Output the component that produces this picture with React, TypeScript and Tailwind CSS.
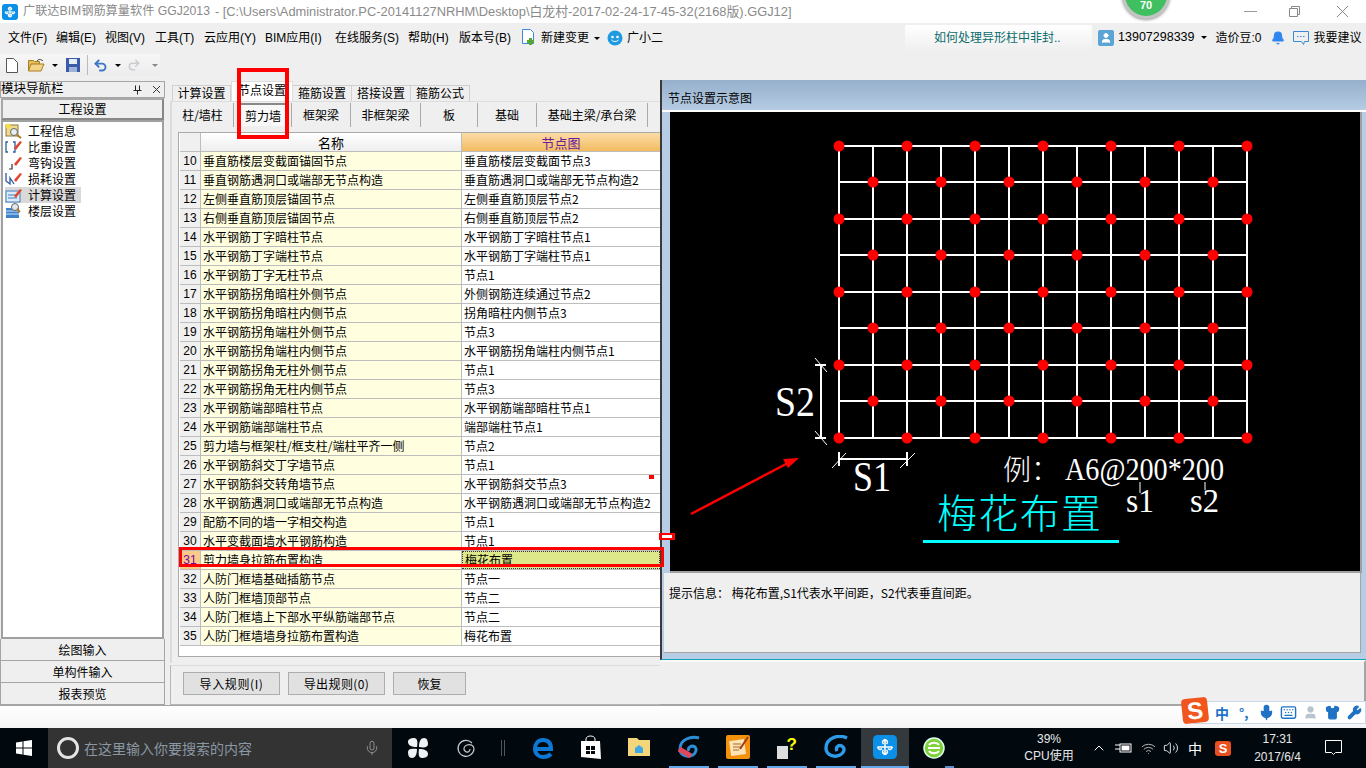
import { Bell, ChevronUp, Keyboard, Mic, Redo2, Shirt, Undo2, User, Volume2, Wifi, Wrench } from 'lucide-react';

const menus = [
  { t: '文件(F)', c: 'w-[48px]' },
  { t: '编辑(E)', c: 'w-[49px]' },
  { t: '视图(V)', c: 'w-[50px]' },
  { t: '工具(T)', c: 'w-[49px]' },
  { t: '云应用(Y)', c: 'w-[61px]' },
  { t: 'BIM应用(I)', c: 'w-[70px]' },
  { t: '在线服务(S)', c: 'w-[73px]' },
  { t: '帮助(H)', c: 'w-[51px]' },
  { t: '版本号(B)', c: 'w-[60px]' },
];

const subTabs = [
  { t: '柱/墙柱', c: 'w-[62px]' },
  { t: '剪力墙', c: 'w-[58px]', on: true },
  { t: '框架梁', c: 'w-[59px]' },
  { t: '非框架梁', c: 'w-[70px]' },
  { t: '板', c: 'w-[57px]' },
  { t: '基础', c: 'w-[59px]' },
  { t: '基础主梁/承台梁', c: 'w-[111px]' },
];

const rows = [
  [10, '垂直筋楼层变截面锚固节点', '垂直筋楼层变截面节点3'],
  [11, '垂直钢筋遇洞口或端部无节点构造', '垂直筋遇洞口或端部无节点构造2'],
  [12, '左侧垂直筋顶层锚固节点', '左侧垂直筋顶层节点2'],
  [13, '右侧垂直筋顶层锚固节点', '右侧垂直筋顶层节点2'],
  [14, '水平钢筋丁字暗柱节点', '水平钢筋丁字暗柱节点1'],
  [15, '水平钢筋丁字端柱节点', '水平钢筋丁字端柱节点1'],
  [16, '水平钢筋丁字无柱节点', '节点1'],
  [17, '水平钢筋拐角暗柱外侧节点', '外侧钢筋连续通过节点2'],
  [18, '水平钢筋拐角暗柱内侧节点', '拐角暗柱内侧节点3'],
  [19, '水平钢筋拐角端柱外侧节点', '节点3'],
  [20, '水平钢筋拐角端柱内侧节点', '水平钢筋拐角端柱内侧节点1'],
  [21, '水平钢筋拐角无柱外侧节点', '节点1'],
  [22, '水平钢筋拐角无柱内侧节点', '节点3'],
  [23, '水平钢筋端部暗柱节点', '水平钢筋端部暗柱节点1'],
  [24, '水平钢筋端部端柱节点', '端部端柱节点1'],
  [25, '剪力墙与框架柱/框支柱/端柱平齐一侧', '节点2'],
  [26, '水平钢筋斜交丁字墙节点', '节点1'],
  [27, '水平钢筋斜交转角墙节点', '水平钢筋斜交节点3'],
  [28, '水平钢筋遇洞口或端部无节点构造', '水平钢筋遇洞口或端部无节点构造2'],
  [29, '配筋不同的墙一字相交构造', '节点1'],
  [30, '水平变截面墙水平钢筋构造', '节点1'],
  [31, '剪力墙身拉筋布置构造', '梅花布置'],
  [32, '人防门框墙基础插筋节点', '节点一'],
  [33, '人防门框墙顶部节点', '节点二'],
  [34, '人防门框墙上下部水平纵筋端部节点', '节点二'],
  [35, '人防门框墙墙身拉筋布置构造', '梅花布置'],
] as const;

const Caret = ({ c = 'border-t-black' }: { c?: string }) => (
  <span className={`inline-block w-0 h-0 border-x-[3px] border-x-transparent border-t-[3px] ${c}`} />
);

function Logo() {
  return (
    <svg width="16" height="16" viewBox="0 0 16 16">
      <rect width="16" height="16" rx="3" fill="#0c8fe6" />
      <path d="M8 3v10M3 8h10M8 3c-2 1-2 2-1 3M8 3c2 1 2 2 1 3M3 8c1 2 2 2 3 1M13 8c-1 2-2 2-3 1M8 13c-2-1-2-2-1-3M8 13c2-1 2-2 1-3" stroke="#fff" strokeWidth="1.2" fill="none" />
    </svg>
  );
}

function NavIcon({ i }: { i: number }) {
  const pencil = <path d="M9 9l6-7 2 1-6 8z" fill="#e5442c" />;
  if (i === 0)
    return (
      <svg width="17" height="16" viewBox="0 0 17 16">
        <rect x="1" y="2" width="12" height="11" fill="#efd98a" stroke="#8a7a40" />
        <circle cx="3" cy="3" r="2.5" fill="#f5e04a" />
        <circle cx="9" cy="9" r="3.5" fill="#e8eef5" stroke="#666" />
        <path d="M12 12l4 3" stroke="#b07a20" strokeWidth="2" />
      </svg>
    );
  if (i === 1)
    return (
      <svg width="17" height="16" viewBox="0 0 17 16">
        <path d="M3 3H1v10h2M8 3h2v10H8" stroke="#2c5a9c" strokeWidth="1.3" fill="none" />
        {pencil}
      </svg>
    );
  if (i === 2)
    return (
      <svg width="17" height="16" viewBox="0 0 17 16">
        <path d="M7 9v5H4" stroke="#333" strokeWidth="1.2" fill="none" />
        {pencil}
      </svg>
    );
  if (i === 3)
    return (
      <svg width="17" height="16" viewBox="0 0 17 16">
        <path d="M1 2v8l4 3V7l4 6" stroke="#2c5a9c" strokeWidth="1.3" fill="none" />
        {pencil}
      </svg>
    );
  if (i === 4)
    return (
      <svg width="17" height="16" viewBox="0 0 17 16">
        <rect x="1" y="4" width="14" height="11" fill="#dcebf8" stroke="#3f7fbf" />
        <path d="M3 8h7M3 11h9" stroke="#3f7fbf" />
        {pencil}
      </svg>
    );
  return (
    <svg width="17" height="16" viewBox="0 0 17 16">
      <rect x="1" y="5" width="13" height="10" fill="#3f82c9" />
      <path d="M1 8h13M1 11h13" stroke="#cfe3f7" />
      <circle cx="10" cy="4" r="3.5" fill="#dfe7ee" stroke="#666" />
      <path d="M12 6l3 3" stroke="#b07a20" strokeWidth="2" />
    </svg>
  );
}

function Drawing() {
  const xs = Array.from({ length: 13 }, (_, i) => 169 + i * 34);
  const ys = [34, 70, 107, 143, 180, 216, 253, 289, 326];
  return (
    <svg width="690" height="459" viewBox="0 0 690 459" className="block">
      <rect width="690" height="459" fill="#000" />
      {xs.map((x) => (
        <line key={x} x1={x} x2={x} y1={34} y2={326} stroke="#fff" strokeWidth="2" />
      ))}
      {ys.map((y) => (
        <line key={y} x1={169} x2={577} y1={y} y2={y} stroke="#fff" strokeWidth="2" />
      ))}
      {ys.map((y, r) =>
        xs.map((x, c) => ((r + c) % 2 === 0 ? <circle key={`${x}-${y}`} cx={x} cy={y} r="5.5" fill="#f00" /> : null)),
      )}
      <g stroke="#fff" strokeWidth="1">
        <line x1="151" x2="151" y1="253" y2="326" strokeWidth="2" />
        <line x1="145" x2="157" y1="246" y2="260" />
        <line x1="145" x2="157" y1="319" y2="333" />
        <line x1="145" x2="156" y1="253" y2="253" strokeWidth="2" />
        <line x1="145" x2="156" y1="326" y2="326" strokeWidth="2" />
        <line x1="169" x2="237" y1="347" y2="347" strokeWidth="2" />
        <line x1="169" x2="169" y1="340" y2="354" strokeWidth="2" />
        <line x1="237" x2="237" y1="340" y2="354" strokeWidth="2" />
        <line x1="162" x2="176" y1="356" y2="341" />
        <line x1="230" x2="245" y1="356" y2="341" />
        <line x1="470" x2="470" y1="370" y2="381" />
        <line x1="535" x2="535" y1="370" y2="378" />
      </g>
      <g fontFamily="'Liberation Serif',serif" fill="#fff">
        <text x="105" y="304" fontSize="42" textLength="40" lengthAdjust="spacingAndGlyphs">S2</text>
        <text x="183" y="379" fontSize="42" textLength="38" lengthAdjust="spacingAndGlyphs">S1</text>
        <text x="395" y="368" fontSize="32" textLength="159" lengthAdjust="spacingAndGlyphs">A6@200*200</text>
        <text x="456" y="400" fontSize="34" textLength="28" lengthAdjust="spacingAndGlyphs">s1</text>
        <text x="520" y="400" fontSize="34" textLength="29" lengthAdjust="spacingAndGlyphs">s2</text>
      </g>
      <text x="333" y="368" fontSize="28" fill="#fff" fontWeight="300" fontFamily="'Noto Sans CJK SC',sans-serif">例：</text>
      <text x="267" y="416" fontSize="40" fill="#0ff" fontWeight="300" textLength="164" fontFamily="'Noto Sans CJK SC',sans-serif">梅花布置</text>
      <rect x="253" y="428" width="196" height="3" fill="#0ff" />
      <line x1="21" y1="402" x2="118" y2="351" stroke="#f00" strokeWidth="2.5" />
      <path d="M129 346l-16 1 5 9z" fill="#f00" />
    </svg>
  );
}

function WinBadge() {
  return (
    <div className="absolute left-[1122px] top-[-29px] w-[48px] h-[48px] rounded-full bg-[#3fbf5f] border-[3px] border-[#c4c4c4] shadow-[0_1px_3px_#999] flex items-end justify-center pb-[3px] text-white text-[11px] font-bold [font-family:'Liberation_Sans',sans-serif]">
      70
    </div>
  );
}

function TaskIcon({ c, children }: { c: string; children: React.ReactNode }) {
  return <div className={`h-full flex items-center justify-center border-b-2 ${c}`}>{children}</div>;
}

function Taskbar() {
  return (
    <div className="h-[40px] bg-[#01090f] flex items-stretch text-white">
      <div className="w-[48px] flex items-center justify-center">
        <svg width="16" height="16" viewBox="0 0 16 16" fill="#fff">
          <path d="M0 2.5l6.5-1V7.5H0zM7.5 1.3L16 0v7.5H7.5zM0 8.500h6.500v6L0 13.500zM7.500 8.500H16V16l-8.500-1.300z" />
        </svg>
      </div>
      <div className="w-[344px] bg-[#333333] flex items-center pl-[9px] pr-[12px]">
        <span className="w-[22px] h-[22px] rounded-full border-[3px] border-[#e4e4e4]" />
        <span className="ml-[5px] text-[14px] text-[#8b98a3]">在这里输入你要搜索的内容</span>
        <Mic size={16} className="ml-auto text-[#9a9a9a]" strokeWidth={1.3} />
      </div>
      <div className="w-[50px] ml-px flex items-center justify-center">
        <svg width="22" height="22" viewBox="0 0 22 22" fill="#eef2f4">
          <path d="M10 10C4 10 1 8 1 5s3-4 6-4 4 3 3 9zM12 10c0-6 2-9 5-9s4 3 4 6-3 4-9 3zM12 12c6 0 9 2 9 5s-3 4-6 4-4-3-3-9zM10 12c0 6-2 9-5 9s-4-3-4-6 3-4 9-3z" />
        </svg>
      </div>
      <div className="w-[46px] flex items-center justify-center">
        <svg width="20" height="20" viewBox="0 0 20 20" fill="none" stroke="#c8c8c8" strokeWidth="1.2">
          <path d="M16 5A8 8 0 1 0 18 11C18 7 14 6 11 7 8 8 7 11 9 13s5 1 5-2" />
        </svg>
      </div>
      <div className="w-[27px] flex items-center justify-center gap-[2px]">
        <span className="w-px h-[16px] bg-[#555]" />
        <span className="w-px h-[16px] bg-[#555]" />
      </div>
      <div className="w-[49px] ml-[2px] flex items-center justify-center">
        <svg width="22" height="22" viewBox="0 0 22 22" fill="none" stroke="#0d78d4" strokeWidth="4">
          <path d="M3 12h16C19 6 16 3 11 3S3 7 3 12s4 8 8 8c3 0 6-1 8-3" />
        </svg>
      </div>
      <TaskIcon c="w-[47px] border-transparent">
        <svg width="21" height="24" viewBox="0 0 21 24" fill="#fff">
          <path d="M6 6V4c0-4 9-4 9 0v2" fill="none" stroke="#fff" />
          <path d="M1 6h19l1 18-20-2z" />
          <path d="M6 11h4v4H6zM11 11h4v4h-4zM6 16h4v3H6zM11 16h4v3h-4z" fill="#01090f" />
        </svg>
      </TaskIcon>
      <TaskIcon c="w-[49px] border-transparent">
        <svg width="22" height="20" viewBox="0 0 22 20">
          <path d="M0 1h9l2 2h11v16H0z" fill="#f4d67a" />
          <path d="M7 16v-5l4-3 4 3v5z" fill="#3fa9e5" />
        </svg>
      </TaskIcon>
      <TaskIcon c="w-[40px] ml-[6px] border-[#64a8ec]">
        <svg width="24" height="24" viewBox="0 0 24 24" fill="none">
          <path d="M22 3c-8-2-19 1-19 11 0 6 7 9 13 6 3-2 4-6 2-8-3-2-8 0-6 4" stroke="#2b8fd8" strokeWidth="3" />
          <path d="M2 14l12 7" stroke="#e0485a" strokeWidth="5" />
        </svg>
      </TaskIcon>
      <TaskIcon c="w-[40px] ml-[9px] border-[#64a8ec]">
        <svg width="24" height="24" viewBox="0 0 24 24">
          <rect width="24" height="24" rx="2" fill="#f5920d" />
          <rect x="4" y="5" width="15" height="15" fill="#fbe4b8" transform="rotate(-8 12 12)" />
          <path d="M7 9h8M7 12h8M7 15h6" stroke="#a86a1c" />
          <path d="M14 14L22 2" stroke="#a33a10" strokeWidth="2" />
        </svg>
      </TaskIcon>
      <TaskIcon c="w-[40px] ml-[9px] border-[#64a8ec]">
        <div className="relative w-[20px] h-[24px]">
          <span className="absolute left-0 bottom-0 w-[11px] h-[13px] bg-[#ddd]" />
          <span className="absolute right-0 top-[-3px] text-[17px] font-bold text-[#ffff00] [font-family:'Liberation_Sans',sans-serif]">?</span>
        </div>
      </TaskIcon>
      <TaskIcon c="w-[40px] ml-[9px] border-[#64a8ec]">
        <svg width="24" height="24" viewBox="0 0 24 24" fill="none">
          <path d="M23 3C14-1 2 3 2 13c0 7 8 10 14 7 4-2 5-6 3-8-3-3-8-1-6 4" stroke="#2b9bea" strokeWidth="3.400" />
        </svg>
      </TaskIcon>
      <TaskIcon c="w-[48px] ml-[5px] border-[#64a8ec] bg-[#33393c]">
        <svg width="24" height="24" viewBox="0 0 16 16">
          <rect width="16" height="16" rx="3" fill="#0c8fe6" />
          <path d="M8 3v10M3 8h10M8 3c-2 1-2 2-1 3M8 3c2 1 2 2 1 3M3 8c1 2 2 2 3 1M13 8c-1 2-2 2-3 1M8 13c-2-1-2-2-1-3M8 13c2-1 2-2 1-3" stroke="#fff" strokeWidth="1" fill="none" />
        </svg>
      </TaskIcon>
      <div className="relative w-[48px] ml-px flex items-center justify-center">
        <svg width="24" height="24" viewBox="0 0 24 24">
          <circle cx="12" cy="12" r="10" fill="#7fd13a" stroke="#dfe" strokeWidth="1.500" />
          <path d="M6 12h12M7 9c2-3 8-3 10 0M7 15c2 3 8 3 10 0" stroke="#fff" strokeWidth="2" fill="none" />
        </svg>
        <span className="absolute right-[4px] bottom-0 w-[9px] h-[2px] bg-[#5b8fc9]" />
      </div>
      <div className="w-[49px]" />
      <div className="w-[84px] flex flex-col items-center justify-center text-[12px] leading-[17px] text-[#e8e8e8] [font-family:'Liberation_Sans','Noto_Sans_CJK_SC',sans-serif]">
        <span>39%</span>
        <span>CPU使用</span>
      </div>
      <div className="w-[149px] flex items-center">
        <ChevronUp size={16} strokeWidth={1.5} />
        <svg width="17" height="12" viewBox="0 0 17 12" fill="none" stroke="#fff" className="ml-[8px]">
          <rect x="5" y="2" width="11" height="8" />
          <rect x="7" y="4" width="7" height="4" fill="#fff" />
          <path d="M0 3h5M0 7h5" />
        </svg>
        <Wifi size={15} strokeWidth={1.5} className="ml-[9px] text-[#bbb]" />
        <Volume2 size={16} strokeWidth={1.3} className="ml-[7px]" />
        <span className="text-[14px] ml-[9px]">中</span>
        <span className="ml-[13px] w-[16px] h-[15px] rounded-[3px] bg-[#e8501f] text-[13px] leading-[15px] font-bold text-center [font-family:'Liberation_Sans',sans-serif]">S</span>
      </div>
      <div className="w-[75px] flex flex-col items-center justify-center text-[12px] leading-[18px] text-[#e8e8e8] [font-family:'Liberation_Sans',sans-serif]">
        <span>17:31</span>
        <span>2017/6/4</span>
      </div>
      <div className="w-[36px] flex items-center justify-center">
        <svg width="17" height="16" viewBox="0 0 17 16" fill="none" stroke="#fff">
          <path d="M.5.500h16v12h-6l-2 2-2-2h-6z" />
        </svg>
      </div>
    </div>
  );
}

export default function App() {
  return (
    <div className="relative w-[1366px] h-[768px] overflow-hidden flex flex-col bg-[#efefef] text-[12px] text-black [font-family:'Noto_Sans_CJK_SC','Liberation_Sans',sans-serif]">
      {/* title */}
      <div className="h-[23px] bg-white flex items-center pl-[2px] text-[#8a8a8a] [font-family:'Liberation_Sans','Noto_Sans_CJK_SC',sans-serif]">
        <Logo />
        <span className="ml-[5px] text-[12.2px] whitespace-pre">广联达BIM钢筋算量软件 GGJ2013</span>
        <span className="ml-[5px] text-[12.85px] whitespace-pre">- [C:\Users\Administrator.PC-20141127NRHM\Desktop\白龙村-2017-02-24-17-45-32(2168版).GGJ12]</span>
        <div className="ml-auto flex items-center text-[#8a8a8a]">
          <span className="w-[13px] h-px bg-[#999] mr-[32px]" />
          <svg width="11" height="11" viewBox="0 0 11 11" fill="none" stroke="#888" className="mr-[37px]">
            <path d="M2.500 2.500V.5h8v8h-2M.5 2.500h8v8h-8z" />
          </svg>
          <svg width="11" height="11" viewBox="0 0 11 11" stroke="#888" className="mr-[18px]">
            <path d="M0 0l11 11M11 0L0 11" />
          </svg>
        </div>
      </div>
      <WinBadge />

      {/* menu */}
      <div className="h-[29px] flex items-center pl-[8px] [font-family:'Liberation_Sans','Noto_Sans_CJK_SC',sans-serif]">
        {menus.map((m) => (
          <span key={m.t} className={`${m.c} shrink-0 whitespace-nowrap`}>{m.t}</span>
        ))}
        <svg width="15" height="17" viewBox="0 0 15 17" className="ml-[2px]">
          <path d="M1.500.500h8l3 3v11h-11z" fill="#fff" stroke="#3b8ad9" />
          <path d="M8 9h3v2h2v3h-2v2H8v-2H6v-3h2z" fill="#55a630" />
        </svg>
        <span className="ml-[5px]">新建变更</span>
        <span className="ml-[5px] mt-[1px] flex"><Caret /></span>
        <svg width="16" height="16" viewBox="0 0 16 16" className="ml-[7px]">
          <circle cx="8" cy="8" r="7.500" fill="#1e9be0" />
          <circle cx="5.500" cy="7" r="1.300" fill="#fff" />
          <circle cx="10.500" cy="7" r="1.300" fill="#fff" />
          <path d="M4.500 10c2 2 5 2 7 0" stroke="#fff" fill="none" />
        </svg>
        <span className="ml-[4px]">广小二</span>
        <div className="ml-[242px] w-[187px] h-[26px] mt-[1px] rounded-[2px] bg-gradient-to-b from-white to-[#efefef] text-[#0a6b6b] flex items-center pl-[29px] whitespace-nowrap">如何处理异形柱中非封..</div>
        <span className="ml-[6px] w-[16px] h-[16px] rounded-[2px] bg-[#5aa5d6] flex items-center justify-center"><User size={12} className="text-white" fill="#fff" /></span>
        <span className="ml-[4px] text-[12.500px]">13907298339</span>
        <span className="ml-[6px] flex"><Caret /></span>
        <span className="ml-[9px]">造价豆:0</span>
        <Bell size={14} className="ml-[9px] text-[#2f86f0]" fill="#2f86f0" />
        <svg width="16" height="16" viewBox="0 0 16 16" fill="none" stroke="#3b8ad9" className="ml-[8px]">
          <path d="M.5 1.500h15v10h-4l-1 3-2-3h-8z" />
          <path d="M4 6.500h1.500M7 6.500h1.500M10 6.500h1.500" />
        </svg>
        <span className="ml-[5px] whitespace-nowrap">我要建议</span>
      </div>

      {/* toolbar */}
      <div className="h-[28px] flex items-start">
        <div className="mt-[2px] h-[22px] w-[160px] bg-gradient-to-b from-[#f6f6f6] to-[#ececec] flex items-center pl-[6px]">
          <svg width="12" height="15" viewBox="0 0 12 15">
            <path d="M.5.500h7l4 4v10H.5z" fill="#fff" stroke="#555" />
          </svg>
          <svg width="17" height="14" viewBox="0 0 17 14" className="ml-[10px]">
            <path d="M.5 2.500h5l1 1h5v9H.5z" fill="#e8bc5a" stroke="#a87c20" />
            <path d="M9 3c1-2 4-2 6 0" stroke="#333" fill="none" />
            <path d="M3 6h13l-3 7H.5z" fill="#f3d488" stroke="#a87c20" />
          </svg>
          <span className="ml-[7px] flex"><Caret /></span>
          <svg width="14" height="14" viewBox="0 0 14 14" className="ml-[8px]">
            <rect width="14" height="14" fill="#3a5ca8" />
            <rect x="3" y="1" width="8" height="5" fill="#e8eef8" />
            <rect x="3" y="9" width="8" height="5" fill="#9db3d8" />
          </svg>
          <span className="ml-[7px] w-px h-[20px] bg-[#bbb]" />
          <Undo2 size={15} strokeWidth={3} className="ml-[5px] text-[#3d75c9]" />
          <span className="ml-[7px] flex"><Caret /></span>
          <Redo2 size={14} strokeWidth={2.500} className="ml-[6px] text-[#c8ccd0]" />
          <span className="ml-[11px] flex"><Caret c="border-t-[#888]" /></span>
        </div>
      </div>

      {/* main */}
      <div className="flex-1 flex min-h-0">
        <aside className="w-[165px] shrink-0 pt-[1px] flex flex-col">
          <div className="h-[17px] border border-[#a5a5a5] flex items-center pr-[3px] pb-[3px] leading-none">
            <span className="text-[12.500px]">模块导航栏</span>
            <svg width="9" height="10" viewBox="0 0 9 10" fill="none" stroke="#222" className="ml-auto mr-[11px] mt-[3px]">
              <path d="M2.500 .5v5M6.500 .5v5M.5 5.500h8M4.500 5.500v4" />
            </svg>
            <svg width="7" height="7" viewBox="0 0 7 7" stroke="#333" className="mr-[1px] mt-[3px]">
              <path d="M0 0l7 7M7 0L0 7" />
            </svg>
          </div>
          <button className="mx-[1px] h-[22px] bg-[#efefef] border-2 border-[#a8a8a8] border-r-[#888] border-b-[#888] shrink-0">工程设置</button>
          <div className="mx-[1px] flex-1 min-h-0 bg-white border-2 border-[#a0a0a0] pt-[1px] pl-[2px]">
            {['工程信息', '比重设置', '弯钩设置', '损耗设置', '计算设置', '楼层设置'].map((t, i) => (
              <div key={t} className={`h-[16px] w-[76px] flex items-center gap-[6px] leading-none ${i === 4 ? 'bg-[#d9d9d9]' : ''}`}>
                <NavIcon i={i} />
                <span>{t}</span>
              </div>
            ))}
          </div>
          {['绘图输入', '单构件输入', '报表预览'].map((t) => (
            <div key={t} className="h-[22px] shrink-0 border border-[#a5a5a5] border-t-0 first-of-type:border-t flex items-center justify-center leading-none">{t}</div>
          ))}
        </aside>

        <section className="w-[490px] ml-[5px] shrink-0 flex flex-col">
          {/* tabs */}
          <div className="h-[21px] pl-[2px] flex items-end">
            {['计算设置', '节点设置', '箍筋设置', '搭接设置', '箍筋公式'].map((t, i) => (
              <div key={t} className={i === 1 ? 'w-[62px] h-[20px] pb-[3px] bg-white border border-[#ddd] border-b-0 flex items-center justify-center' : 'w-[59px] h-[16px] pb-[2px] border border-[#d0d0d0] border-b-0 border-l-0 first:border-l flex items-center justify-center leading-none'}>{t}</div>
            ))}
          </div>
          {/* pane */}
          <div className="h-[562px] border-t border-l-2 border-[#dcdcdc] pl-[6px] flex flex-col">
            <div className="h-[26px] ml-[-6px] shrink-0 flex items-center">
              {subTabs.map((s) => (
                <div key={s.t} className={`${s.c} h-[24px] pb-[1px] border-r border-[#aaa] flex items-center justify-center whitespace-nowrap`}>
                  {s.on ? (
                    <span className="w-[46px] h-[23px] bg-[#f8f8f8] border-t-2 border-l-2 border-[#888] flex items-center justify-center ml-[-1px]">{s.t}</span>
                  ) : (
                    s.t
                  )}
                </div>
              ))}
            </div>
            <div className="mt-[4px] h-[525px] border border-[#aaa] border-r-0 bg-white pl-px">
              <div className="h-[19px] flex border-b border-[#bdbdbd] leading-none">
                <div className="w-[21px] bg-[#f0f0f0] border-r border-[#bdbdbd]" />
                <div className="w-[261px] bg-gradient-to-b from-white to-[#eeeeee] border-r border-[#bdbdbd] flex items-center justify-center text-[13px]">名称</div>
                <div className="flex-1 bg-gradient-to-b from-[#fbdca6] to-[#f2bc60] text-[#6a1b9a] text-[13px] flex items-center justify-center">节点图</div>
              </div>
              {rows.map(([n, a, b]) => {
                const on = n === 31;
                return (
                  <div key={n} className="h-[19px] flex border-b border-[#bdbdbd] leading-none">
                    <div className={`w-[21px] border-r border-[#bdbdbd] flex items-center justify-center text-[12px] [font-family:'Liberation_Sans',sans-serif] ${on ? 'bg-[#f9c98a] text-[#8000a0]' : 'bg-[#f0f0f0]'}`}>{n}</div>
                    <div className="w-[261px] bg-[#ffffe0] border-r border-[#bdbdbd] flex items-center pl-[2px] whitespace-nowrap overflow-hidden">{a}</div>
                    <div className={`flex-1 flex items-center pl-[2px] whitespace-nowrap overflow-hidden ${on ? 'bg-[#dce88a] border border-dotted border-[#334]' : ''}`}>{b}</div>
                  </div>
                );
              })}
            </div>
          </div>
          <div className="mt-[2px] flex-1 border-t border-b border-l border-[#b5b5b5] border-t-[#ddd] flex items-center pl-[12px] pb-[3px] gap-[8px] leading-none">
            <button className="w-[97px] h-[23px] bg-[#e1e1e1] border border-[#adadad] tracking-[0.6px]">导入规则(I)</button>
            <button className="w-[97px] h-[23px] bg-[#e1e1e1] border border-[#adadad] tracking-[0.4px]">导出规则(0)</button>
            <button className="w-[73px] h-[23px] bg-[#e1e1e1] border border-[#adadad]">恢复</button>
          </div>
        </section>

        <section className="flex-1 min-w-0 flex flex-col">
          <div className="h-[580px] border-l-2 border-[#3a3a3a] border-b border-b-[#12a5b5] flex flex-col bg-[#b7cde6]">
            <div className="h-[32px] shrink-0 bg-gradient-to-b from-[#96afcb] to-[#b5cce4] flex items-end pl-[6px] pb-[6px] leading-none border-b-2 border-white">
              节点设置示意图
            </div>
            <div className="ml-[8px] w-[692px] h-[461px] shrink-0 border-r-2 border-b-2 border-[#a0a0a0]">
              <Drawing />
            </div>
            <div className="ml-[2px] w-[697px] h-[80px] shrink-0 bg-[#efefef] border-r border-b border-[#a5a5a5] pl-[5px] pt-[14px] leading-none">
              提示信息： 梅花布置,S1代表水平间距，S2代表垂直间距。
            </div>
          </div>
          <div className="flex-1 border-r-2 border-[#a5a5a5] border-b border-b-[#a5a5a5] border-t-2 border-t-[#fafafa]" />
        </section>
      </div>

      {/* status strip */}
      <div className="h-[23px] border-t border-[#a5a5a5] bg-gradient-to-b from-white to-[#f5f5f5]" />
      <Taskbar />

      {/* sogou bar */}
      <div className="absolute left-[1193px] top-[701px] w-[173px] h-[23px] bg-white border border-[#c6d8ea] flex items-center text-[#1f72c4]">
        <span className="ml-[21px] text-[14px] font-bold leading-none">中</span>
        <span className="ml-[10px] text-[13px] font-bold leading-none">°,</span>
        <Mic size={17} className="ml-[10px]" fill="#1f72c4" />
        <Keyboard size={17} className="ml-[5px]" />
        <User size={15} className="ml-[6px] text-[#b8c4d0]" fill="#b8c4d0" />
        <Shirt size={15} className="ml-[7px]" fill="#1f72c4" />
        <Wrench size={15} className="ml-[7px]" fill="#1f72c4" />
      </div>
      <div className="absolute left-[1182px] top-[698px] w-[26px] h-[25px] bg-[#f0561e] rounded-[4px] -rotate-6 text-white text-[24px] leading-[25px] font-bold text-center [font-family:'Liberation_Sans',sans-serif]">S</div>

      {/* red annotation marks */}
      <div className="absolute left-[237px] top-[68px] w-[52px] h-[71px] border-4 border-[#f00]" />
      <div className="absolute left-[179px] top-[547px] w-[485px] h-[20px] border-[3px] border-[#f00]" />
      <div className="absolute left-[659px] top-[533px] w-[16px] h-[7px] border-x-[3px] border-y-2 border-[#f00] bg-white" />
      <div className="absolute left-[649px] top-[475px] w-[5px] h-[4px] bg-[#f00]" />
    </div>
  );
}
